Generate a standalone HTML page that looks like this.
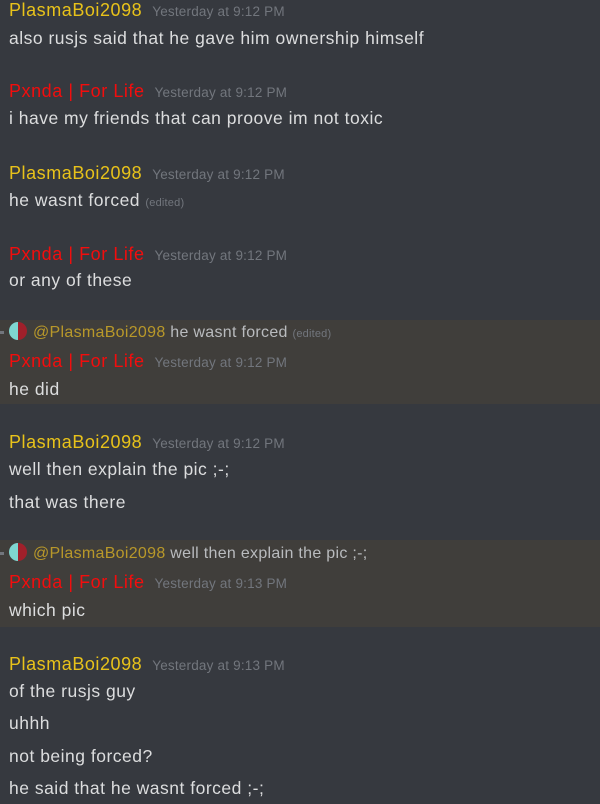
<!DOCTYPE html>
<html><head><meta charset="utf-8"><style>
body{margin:0;width:600px;height:804px;background:#36393f;position:relative;overflow:hidden;font-family:"Liberation Sans","DejaVu Sans",sans-serif;}
.hl{position:absolute;left:0;width:600px;background:#403e3b;}
.r{position:absolute;left:9px;white-space:nowrap;line-height:20px;}
.n{font-size:18px;letter-spacing:0.55px;}
.y{color:#e8c21a;}.red{color:#f20d0d;}
.ts{font-size:13.5px;color:#72767d;margin-left:10px;letter-spacing:0.2px;}
.t{font-size:17.5px;color:#dcddde;letter-spacing:0.5px;}
.ed{font-size:11px;color:#72767d;letter-spacing:0.2px;}
.rp{font-size:16px;color:#b9bbbe;letter-spacing:0.3px;}
.m{color:#b8982a;}
.av{display:inline-block;width:18px;height:18px;border-radius:50%;background:linear-gradient(90deg,#7fd6d0 50%,#a0202a 50%);vertical-align:-3px;margin-right:6px;}
.dot{position:absolute;left:0;width:4px;height:3px;background:#72767d;}
</style></head><body>
<div class="hl" style="top:320px;height:84px"></div>
<div class="hl" style="top:540px;height:87px"></div>

<div class="r" style="top:0"><span class="n y">PlasmaBoi2098</span><span class="ts">Yesterday at 9:12 PM</span></div>
<div class="r t" style="top:28px">also rusjs said that he gave him ownership himself</div>

<div class="r" style="top:81px"><span class="n red">Pxnda | For Life</span><span class="ts">Yesterday at 9:12 PM</span></div>
<div class="r t" style="top:108px">i have my friends that can proove im not toxic</div>

<div class="r" style="top:163px"><span class="n y">PlasmaBoi2098</span><span class="ts">Yesterday at 9:12 PM</span></div>
<div class="r t" style="top:190px">he wasnt forced <span class="ed">(edited)</span></div>

<div class="r" style="top:244px"><span class="n red">Pxnda | For Life</span><span class="ts">Yesterday at 9:12 PM</span></div>
<div class="r t" style="top:270px">or any of these</div>

<div class="dot" style="top:331px"></div>
<div class="r rp" style="top:322px"><span class="av"></span><span class="m">@PlasmaBoi2098</span> he wasnt forced <span class="ed">(edited)</span></div>
<div class="r" style="top:351px"><span class="n red">Pxnda | For Life</span><span class="ts">Yesterday at 9:12 PM</span></div>
<div class="r t" style="top:379px">he did</div>

<div class="r" style="top:432px"><span class="n y">PlasmaBoi2098</span><span class="ts">Yesterday at 9:12 PM</span></div>
<div class="r t" style="top:459px">well then explain the pic ;-;</div>
<div class="r t" style="top:492px">that was there</div>

<div class="dot" style="top:552px"></div>
<div class="r rp" style="top:543px"><span class="av"></span><span class="m">@PlasmaBoi2098</span> well then explain the pic ;-;</div>
<div class="r" style="top:572px"><span class="n red">Pxnda | For Life</span><span class="ts">Yesterday at 9:13 PM</span></div>
<div class="r t" style="top:600px">which pic</div>

<div class="r" style="top:654px"><span class="n y">PlasmaBoi2098</span><span class="ts">Yesterday at 9:13 PM</span></div>
<div class="r t" style="top:681px">of the rusjs guy</div>
<div class="r t" style="top:713px">uhhh</div>
<div class="r t" style="top:746px">not being forced?</div>
<div class="r t" style="top:778px">he said that he wasnt forced ;-;</div>
</body></html>
